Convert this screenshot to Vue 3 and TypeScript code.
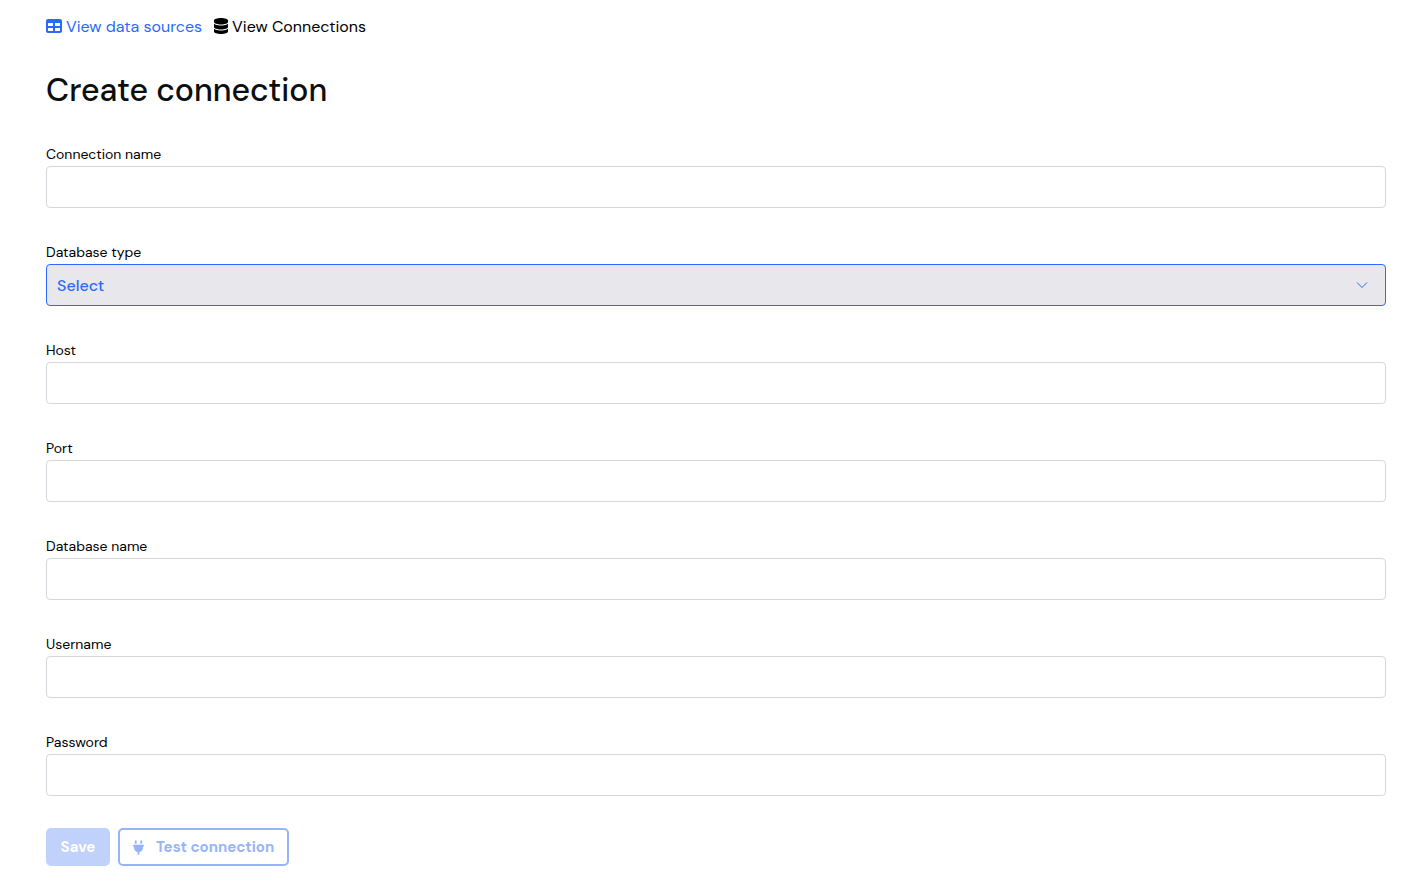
<script setup lang="ts">
import { reactive } from 'vue'

type FieldKey = 'name' | 'type' | 'host' | 'port' | 'database' | 'username' | 'password'

interface Field {
  key: FieldKey
  label: string
  kind: 'text' | 'password' | 'select'
}

const fields: Field[] = [
  { key: 'name', label: 'Connection name', kind: 'text' },
  { key: 'type', label: 'Database type', kind: 'select' },
  { key: 'host', label: 'Host', kind: 'text' },
  { key: 'port', label: 'Port', kind: 'text' },
  { key: 'database', label: 'Database name', kind: 'text' },
  { key: 'username', label: 'Username', kind: 'text' },
  { key: 'password', label: 'Password', kind: 'password' },
]

const form = reactive<Record<FieldKey, string>>({
  name: '',
  type: '',
  host: '',
  port: '',
  database: '',
  username: '',
  password: '',
})
</script>

<template>
  <main class="page">
    <nav class="nav">
      <a class="nav-link active" href="#sources">
        <svg class="nav-icon" viewBox="0 0 512 512" width="16" height="16" aria-hidden="true">
          <path d="M64 256V160H224v96H64zm0 64H224v96H64V320zm224 96V320H448v96H288zM448 256H288V160H448v96zM64 32C28.7 32 0 60.7 0 96V416c0 35.3 28.7 64 64 64H448c35.3 0 64-28.7 64-64V96c0-35.3-28.7-64-64-64H64z" />
        </svg>
        <span>View data sources</span>
      </a>
      <a class="nav-link" href="#connections">
        <svg class="nav-icon" viewBox="0 0 448 512" width="14" height="16" aria-hidden="true">
          <path d="M448 80v48c0 44.2-100.3 80-224 80S0 172.2 0 128V80C0 35.8 100.3 0 224 0S448 35.8 448 80zM393.2 214.7c20.8-7.4 39.9-16.9 54.8-28.6V288c0 44.2-100.3 80-224 80S0 332.2 0 288V186.1c14.9 11.8 34 21.2 54.8 28.6C99.7 230.7 159.5 240 224 240s124.3-9.3 169.2-25.3zM0 346.1c14.9 11.8 34 21.2 54.8 28.6C99.7 390.7 159.5 400 224 400s124.3-9.3 169.2-25.3c20.8-7.4 39.9-16.9 54.8-28.6V432c0 44.2-100.3 80-224 80S0 476.2 0 432V346.1z" />
        </svg>
        <span>View Connections</span>
      </a>
    </nav>

    <h1 class="title">Create connection</h1>

    <form class="form" @submit.prevent>
      <div v-for="field in fields" :key="field.key" class="field">
        <label class="label" :for="field.key">{{ field.label }}</label>
        <div v-if="field.kind === 'select'" class="select-wrap">
          <select :id="field.key" v-model="form[field.key]" class="control select">
            <option value="">Select</option>
          </select>
          <svg class="chevron" viewBox="0 0 12 8" width="12" height="8" aria-hidden="true">
            <path d="M1 1.5 6 6.5 11 1.5" />
          </svg>
        </div>
        <input v-else :id="field.key" v-model="form[field.key]" class="control" :type="field.kind" autocomplete="off" />
      </div>

      <div class="actions">
        <button class="button save" type="submit" disabled>Save</button>
        <button class="button test" type="button" disabled>
          <svg class="plug" viewBox="0 0 384 512" width="11" height="15" aria-hidden="true">
            <path d="M96 0C78.3 0 64 14.3 64 32v96h64V32c0-17.7-14.3-32-32-32zM288 0c-17.7 0-32 14.3-32 32v96h64V32c0-17.7-14.3-32-32-32zM32 160c-17.7 0-32 14.3-32 32s14.3 32 32 32v32c0 77.4 55 142 128 156.8V480c0 17.7 14.3 32 32 32s32-14.3 32-32V412.8C297 398 352 333.4 352 256V224c17.7 0 32-14.3 32-32s-14.3-32-32-32H32z" />
          </svg>
          <span>Test connection</span>
        </button>
      </div>
    </form>
  </main>
</template>

<style>
body {
  background: #fff;
}
</style>

<style scoped>
.page,
.page * {
  box-sizing: border-box;
}

.page {
  padding: 15px 33px 24px 46px;
  color: #000;
  font-family: "DM Sans", Inter, "Open Sans", sans-serif;
  font-size: 16px;
}

.nav {
  display: flex;
  gap: 12px;
  line-height: 24px;
}

.nav-link {
  display: flex;
  align-items: center;
  gap: 4px;
  color: #000;
  font-size: 16px;
  text-decoration: none;
}

.nav-link.active {
  color: #2b69fb;
  font-weight: 450;
}

.nav-icon,
.plug {
  fill: currentColor;
}

.nav-icon {
  margin-bottom: 2px;
}

.title {
  margin: 31px 0 32px;
  color: #0d0e10;
  font-size: 32px;
  font-weight: 500;
  line-height: 40px;
}

.form {
  display: flex;
  flex-direction: column;
  gap: 32px;
}

.field {
  display: flex;
  flex-direction: column;
}

.label {
  font-size: 14px;
  line-height: 24px;
}

.control {
  width: 100%;
  height: 42px;
  margin: 0;
  padding: 0 10px;
  border: 1px solid #d6d7dc;
  border-radius: 4px;
  outline: none;
  background: #fff;
  color: inherit;
  font: inherit;
}

.select-wrap {
  position: relative;
}

.select {
  appearance: none;
  border-color: #2b69fb;
  background: #e8e7ec;
  color: #2b69fb;
  font-weight: 500;
}

.chevron {
  position: absolute;
  top: 17px;
  right: 18px;
  fill: none;
  stroke: #2b69fb;
  pointer-events: none;
}

.actions {
  display: flex;
  gap: 8px;
}

.button {
  display: flex;
  align-items: center;
  justify-content: center;
  height: 38px;
  margin: 0;
  border: 2px solid transparent;
  border-radius: 5px;
  font: inherit;
  font-size: 15px;
  font-weight: 700;
}

.save {
  min-width: 64px;
  padding: 0 10px;
  background: #c0d1fc;
  color: #fff;
}

.test {
  gap: 12px;
  padding: 0 13px;
  border-color: #97b4fa;
  background: #fff;
  color: #97b4fa;
}
</style>
